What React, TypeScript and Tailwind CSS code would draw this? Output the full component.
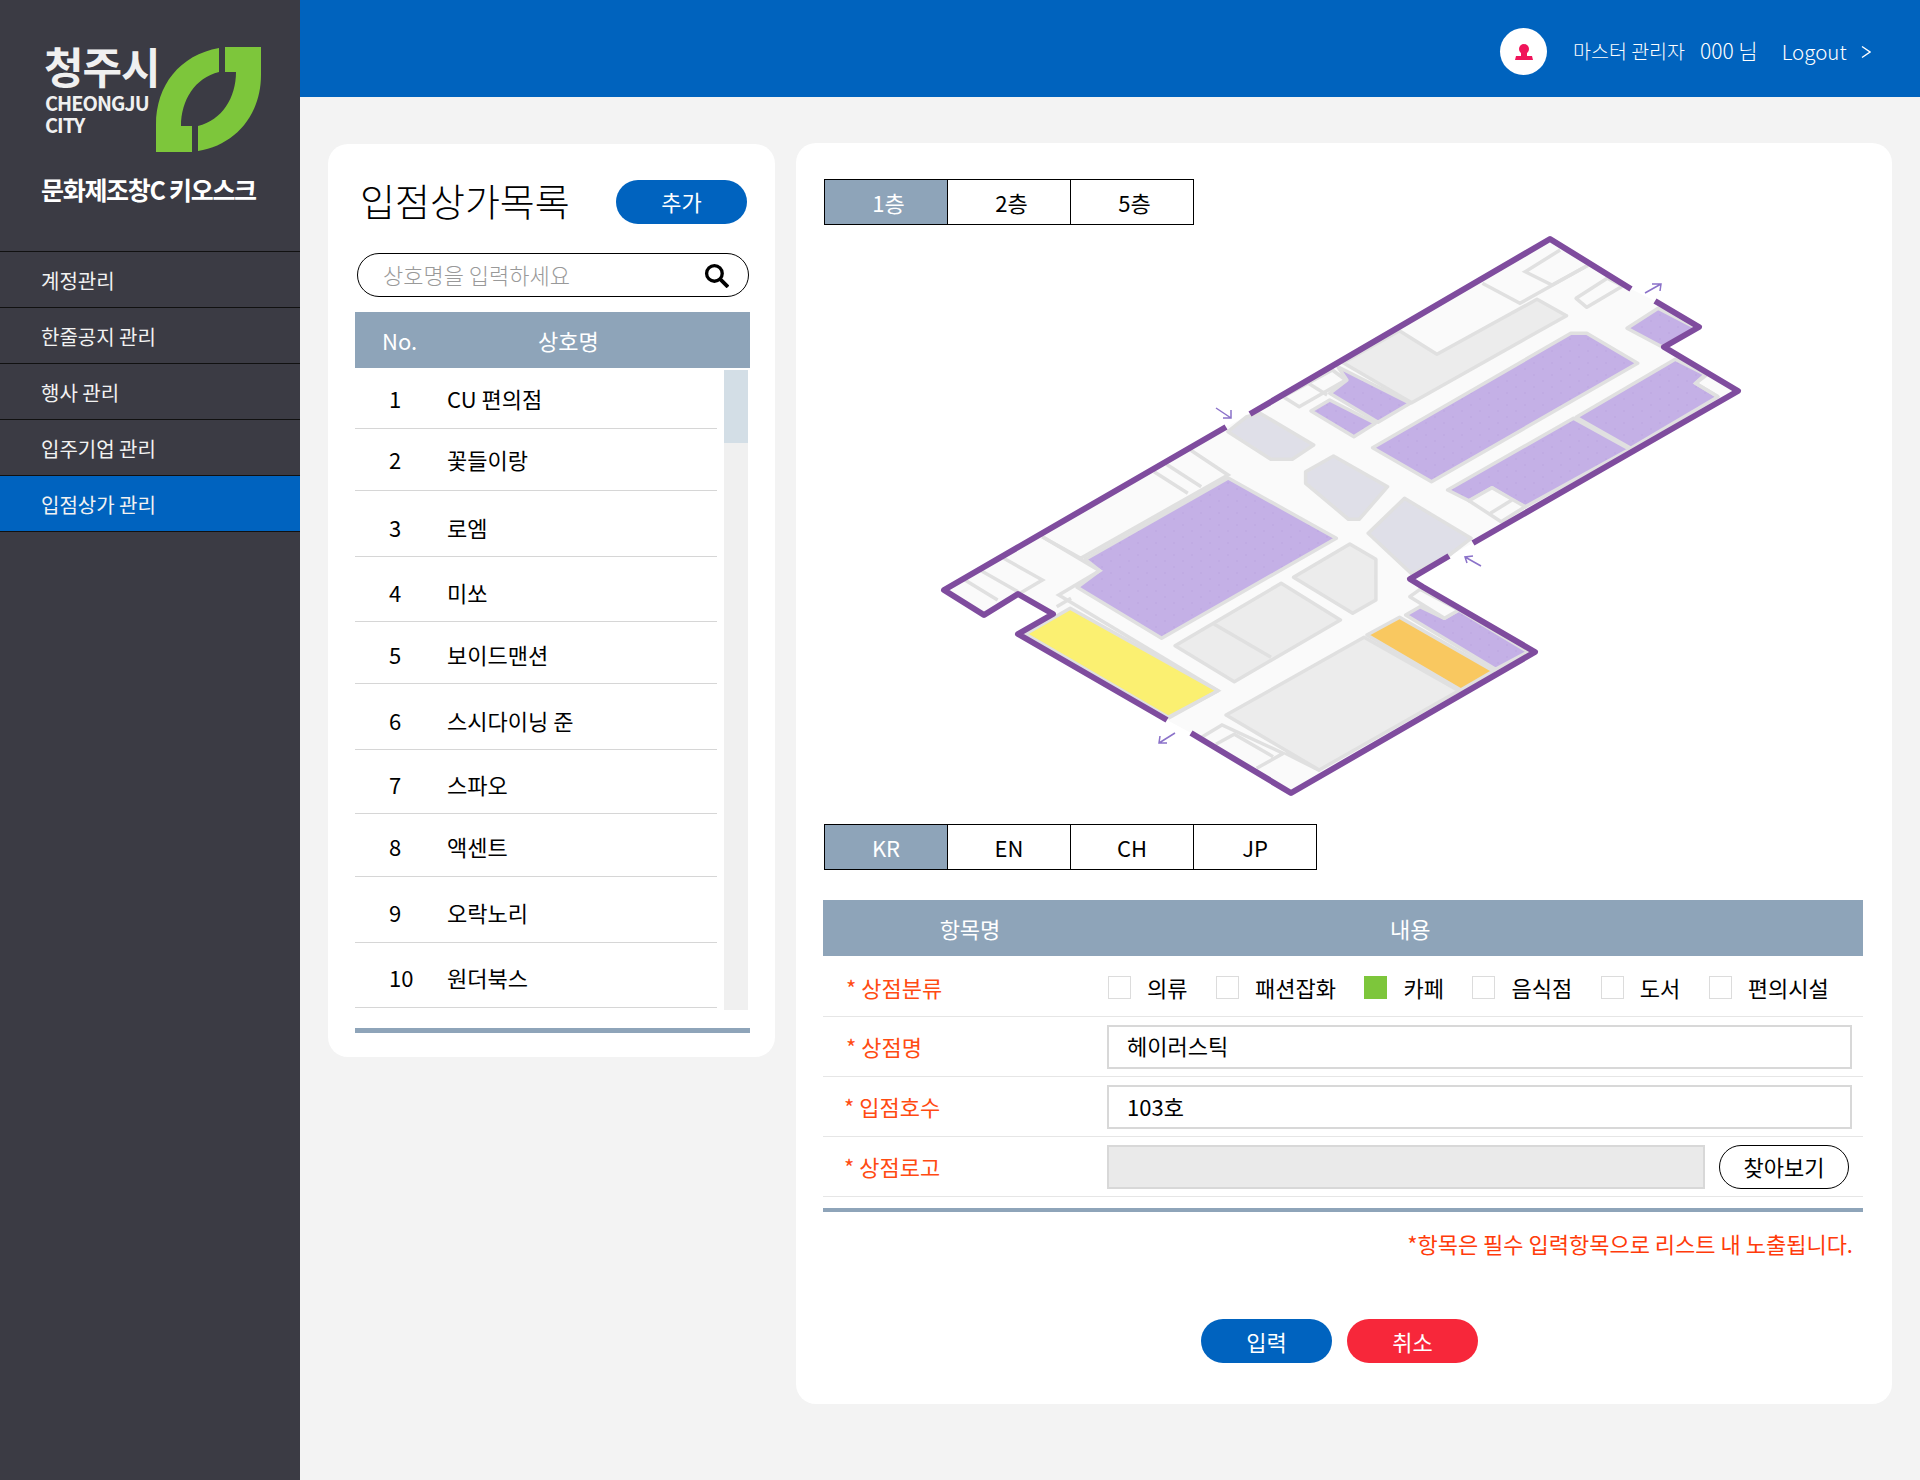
import React from 'react';

const FONT = "font-['Noto_Sans_CJK_KR','Noto_Sans',sans-serif]";

// map coordinates read off the two crops of the floor plan into page pixels
const z2 = (s: string) =>
    s.split(' ').map((p) => {
        const [x, y] = p.split(',').map(Number);
        return `${(920 + x / 1.867).toFixed(1)},${(220 + y / 3).toFixed(1)}`;
    }).join(' ');
const z3 = (s: string) =>
    s.split(' ').map((p) => {
        const [x, y] = p.split(',').map(Number);
        return `${(920 + x / 2.45).toFixed(1)},${(500 + y / 3).toFixed(1)}`;
    }).join(' ');

const menu = ['계정관리', '한줄공지 관리', '행사 관리', '입주기업 관리', '입점상가 관리'];

const shops = [
    { no: 1, name: 'CU 편의점', h: 'h-[59px] pb-[1px]' },
    { no: 2, name: '꽃들이랑', h: 'h-[62px]' },
    { no: 3, name: '로엠', h: 'h-[66px] pt-[7px]' },
    { no: 4, name: '미쏘', h: 'h-[65px] pt-[6px]' },
    { no: 5, name: '보이드맨션', h: 'h-[62px] pt-[4px]' },
    { no: 6, name: '스시다이닝 준', h: 'h-[66px] pt-[8px]' },
    { no: 7, name: '스파오', h: 'h-[64px] pt-[6px]' },
    { no: 8, name: '액센트', h: 'h-[63px] pt-[3px]' },
    { no: 9, name: '오락노리', h: 'h-[66px] pt-[6px]' },
    { no: 10, name: '원더북스', h: 'h-[65px] pt-[4px]' },
];

const categories = [
    { label: '의류', on: false },
    { label: '패션잡화', on: false },
    { label: '카페', on: true },
    { label: '음식점', on: false },
    { label: '도서', on: false },
    { label: '편의시설', on: false },
];

const Tabs: React.FC<{ items: string[]; shift?: boolean }> = ({ items, shift }) => (
    <div className="flex w-fit border border-black">
        {items.map((t, i) => (
            <div
                key={t}
                className={`flex h-[44px] items-center justify-center text-[22px] ${shift ? 'pl-[5px]' : ''} ${i > 0 ? 'w-[123px] border-l border-black text-black' : 'w-[122px] bg-[#8ea4b9] text-white'}`}
            >
                {t}
            </div>
        ))}
    </div>
);

const Label: React.FC<{ text: string; shift?: boolean }> = ({ text, shift }) => (
    <div className={`w-[284px] shrink-0 text-[22px] text-[#ff4b12] ${shift ? 'pl-[21px]' : 'pl-[23px]'}`}>* {text}</div>
);

const FloorPlan: React.FC = () => {
    const wall = 'fill-none stroke-[#7f4c9e] stroke-[6] [stroke-linejoin:round]';
    const room = 'stroke-[#e0e0e0] stroke-[3.5] [stroke-linejoin:round]';
    const line = 'fill-none stroke-[#e0e0e0] stroke-[3.5]';
    const arrow = 'fill-none stroke-[#8b72c9] stroke-[1.5]';
    return (
        <svg width="840" height="599" viewBox="920 225 840 599" className="ml-[96px] block">
            <defs>
                <pattern id="dots" width="18" height="12" patternUnits="userSpaceOnUse">
                    <rect width="18" height="12" fill="#c4b0e6" />
                    <circle cx="4" cy="3" r="0.7" fill="#b9a4df" />
                    <circle cx="13" cy="9" r="0.7" fill="#b9a4df" />
                </pattern>
            </defs>
            {/* floor */}
            <polygon
                className="fill-[#fafafa]"
                points="1550,239 1631,289 1655,301 1699,327 1664,347 1738,391 1473,543 1449,556 1410,579 1423,587 1535,652 1291,793 1191,733 1167,720 1018,634 1053,614 1018,594 984,615 944,590 1226,427 1250,414"
            />
            {/* purple shops */}
            <polygon className={room} fill="url(#dots)" points={z2('780,440 915,550 855,607 765,520 797,480')} />
            <polygon className={room} fill="url(#dots)" points={z2('765,540 850,610 810,650 730,573')} />
            <polygon className={room} fill="url(#dots)" points={z2('1215,340 1245,340 1340,430 955,785 845,683')} />
            <polygon className={room} fill="url(#dots)" points={z2('1410,418 1468,465 1448,490 1490,530 1327,685 1225,592')} />
            <polygon className={room} fill="url(#dots)" points={z2('1220,595 1325,688 1130,860 1105,840 1068,803 1025,842 985,810')} />
            <polygon className={room} fill="url(#dots)" points={z2('1378,265 1450,325 1385,380 1320,325')} />
            <polygon className={room} fill="url(#dots)" points={z3('755,-66 1020,115 592,415 385,262 440,212 405,178')} />
            <polygon className={room} fill="url(#dots)" points={z3('1190,345 1225,320 1285,355 1320,330 1490,455 1410,508')} />
            {/* grey rooms */}
            <polygon className={`${room} fill-[#ececec]`} points={z2('790,428 895,332 965,403 1152,238 1207,287 918,548')} />
            <polygon className={`${room} fill-[#dfdfe8]`} points={z2('575,635 610,590 635,580 735,675 695,718 655,718')} />
            <polygon className={`${room} fill-[#dfdfe8]`} points={z2('772,708 873,800 820,898 800,898 720,790 720,755')} />
            <polygon className={`${room} fill-[#dfdfe8]`} points={z3('1098,100 1187,-5 1350,115 1297,165 1205,222')} />
            <polygon className={`${room} fill-[#ececec]`} points={z3('885,250 1030,360 770,545 625,437')} />
            <polygon className={`${room} fill-[#ececec]`} points={z3('1053,132 1117,178 1117,300 1060,340 915,232')} />
            <polygon className={`${room} fill-[#ececec]`} points={z3('1088,412 1320,572 978,810 750,645')} />
            {/* coloured shops */}
            <polygon className={`${room} fill-[#fbf071]`} points={z3('368,325 730,572 608,652 258,402')} />
            <polygon className={`${room} fill-[#f9c860]`} points={z3('1175,352 1405,513 1325,570 1095,405')} />
            {/* small rooms and partitions */}
            <polygon className={`${room} fill-[#fafafa]`} points={z2('1225,235 1283,175 1312,198 1245,262')} />
            <polygon className={`${room} fill-[#fafafa]`} points={z2('678,530 708,560 795,480 770,450')} />
            <polygon className={`${room} fill-[#fafafa]`} points={z3('1200,290 1225,268 1320,330 1285,355')} />
            <polygon className={`${room} fill-[#fafafa]`} points={z2('1025,842 1068,803 1130,860 1085,905')} />
            <polyline className={line} points={z2('1195,90 1130,155 1180,195 1248,135')} />
            <polyline className={line} points={z2('1050,190 1120,250 1248,135')} />
            <polyline className={line} points={z2('725,490 760,525')} />
            <polyline className={line} points={z2('505,690 575,765 300,1015 228,950')} />
            <polyline className={line} points={z2('460,733 525,800')} />
            <polyline className={line} points={z2('437,755 500,820')} />
            <polyline className={line} points={z2('1465,465 1448,490 1490,530')} />
            <polyline className={line} points={z2('1065,880 1105,840')} />
            <polyline className={line} points={z3('720,372 860,472')} />
            <polyline className={line} points={z3('300,110 440,212 340,285 730,572 608,655')} />
            <polyline className={line} points={z3('205,175 300,240 245,280')} />
            <polyline className={line} points={z3('150,212 240,275')} />
            <polyline className={line} points={z3('110,240 190,300')} />
            <polyline className={line} points={z3('690,712 740,675 890,760 825,805')} />
            <polyline className={line} points={z3('725,733 770,703 865,770')} />
            <polyline className={line} points={z3('895,760 980,812')} />
            <polyline className={line} points={z3('335,320 370,295')} />
            {/* outer walls */}
            <polyline className={wall} points="1250,414 1550,239 1631,289" />
            <polyline className={wall} points="1655,301 1699,327 1664,347 1738,391 1473,543" />
            <polyline className={wall} points="1449,556 1410,579 1423,587 1535,652 1291,793 1191,733" />
            <polyline className={wall} points="1167,720 1018,634 1053,614 1018,594 984,615 944,590 1226,427" />
            {/* door arrows */}
            <path className={arrow} d="M1645 293 L1661 284 M1652 284 L1661 284 L1660 291" />
            <path className={arrow} d="M1216 408 L1231 418 M1231 410 L1231 418 L1223 418" />
            <path className={arrow} d="M1481 566 L1465 557 M1473 556 L1465 557 L1467 563" />
            <path className={arrow} d="M1175 733 L1159 743 M1167 743 L1159 743 L1160 736" />
        </svg>
    );
};

const App: React.FC = () => {
    return (
        <div className={`flex h-[1480px] w-[1920px] overflow-hidden bg-[#f3f3f3] ${FONT}`}>
            {/* sidebar */}
            <aside className="h-full w-[300px] shrink-0 bg-[#3b3b44] text-white">
                <div className="flex h-[252px] flex-col border-b border-[#111] pl-[41px] pt-[41px]">
                    <div className="flex">
                        <div className="w-[115px] whitespace-nowrap pl-[3px] font-bold text-[#f0f0f0]">
                            <div className="h-[48px] text-[43px] leading-[48px] tracking-[-1px]">청주시</div>
                            <div className="ml-[1px] mt-[3px] text-[20px] leading-[22px] tracking-[-1px]">CHEONGJU</div>
                            <div className="ml-[1px] text-[20px] leading-[21px] tracking-[-1px]">CITY</div>
                        </div>
                        <svg width="106" height="106" viewBox="156 46 106 106" className="mt-[5px]">
                            <path fill="#7dc63b" d="M156 152 L156 125 C156 85 180 55 219 48 L219 72 C195 78 181 100 181 126 L192 126 L192 152 Z" />
                            <path fill="#7dc63b" d="M225 47 L261 47 L261 75 C261 115 235 145 198 151 L198 126 C222 120 236 98 236 72 L225 72 Z" />
                        </svg>
                    </div>
                    <div className="mt-[20px] text-[25px] font-bold leading-[34px] tracking-[-1.3px]">문화제조창C 키오스크</div>
                </div>
                {menu.map((m, i) => (
                    <div
                        key={m}
                        className={`flex h-[56px] items-center border-b border-[#111] pl-[41px] pt-[2px] text-[20px] text-[#f2f2f2] ${i === 4 ? 'bg-[#0063bf]' : ''}`}
                    >
                        {m}
                    </div>
                ))}
            </aside>

            <main className="flex min-w-0 flex-1 flex-col">
                {/* top bar */}
                <header className="flex h-[97px] items-center bg-[#0063be] pl-[1200px] pt-[6px] text-white">
                    <div className="flex h-[47px] w-[47px] shrink-0 items-center justify-center rounded-full bg-white">
                        <svg width="22" height="22" viewBox="0 0 22 22">
                            <circle cx="11" cy="8" r="5" fill="#f0145a" />
                            <path fill="#f0145a" d="M8 12h6v3h5l1 4H2l1-4h5z" />
                        </svg>
                    </div>
                    <span className="ml-[26px] whitespace-nowrap pb-[2px] text-[19.5px] font-light">마스터 관리자</span>
                    <span className="ml-[15px] whitespace-nowrap pb-[2px] text-[21px] font-light">000 님</span>
                    <span className="ml-[24px] text-[20.5px] font-light">Logout</span>
                    <svg width="10" height="14" viewBox="0 0 10 14" className="ml-[14px]">
                        <path d="M1 1.5 L9 7 L1 12.5" fill="none" stroke="white" strokeWidth="1.4" />
                    </svg>
                </header>

                <div className="flex items-start pl-[28px]">
                    {/* shop list */}
                    <section className="mt-[47px] h-[913px] w-[447px] shrink-0 rounded-[20px] bg-white pl-[27px] pr-[25px] pt-[32px]">
                        <div className="flex h-[48px] items-center justify-between pl-[5px] pr-[3px]">
                            <h1 className="text-[38px] font-light leading-none text-black">입점상가목록</h1>
                            <button className="mt-[4px] h-[44px] w-[131px] rounded-full bg-[#0063bf] pb-[2px] text-[22px] text-white">추가</button>
                        </div>
                        <div className="ml-[2px] mt-[29px] flex h-[44px] w-[392px] items-center justify-between rounded-full border-[1.5px] border-black pl-[25px] pr-[19px]">
                            <span className="pb-[2px] text-[22px] font-light text-[#999]">상호명을 입력하세요</span>
                            <svg width="25" height="25" viewBox="0 0 24 24">
                                <circle cx="10" cy="10" r="7.5" fill="none" stroke="black" strokeWidth="3.2" />
                                <path d="M15.5 15.5 L23 23" stroke="black" strokeWidth="3.6" />
                            </svg>
                        </div>
                        <div className="mt-[15px] flex h-[56px] w-[395px] items-center bg-[#8ea4b9] text-[22px] text-white">
                            <span className="ml-[27px] w-[156px]">No.</span>
                            <span>상호명</span>
                        </div>
                        <div className="mt-[2px] flex w-[395px] items-start">
                            <div className="w-[362px]">
                                {shops.map((s) => (
                                    <div key={s.no} className={`flex items-center border-b border-[#d6d6d6] text-[22px] text-black ${s.h}`}>
                                        <span className="w-[92px] pl-[34px]">{s.no}</span>
                                        <span>{s.name}</span>
                                    </div>
                                ))}
                            </div>
                            <div className="ml-[7px] h-[640px] w-[24px] bg-[#f0f0f0]">
                                <div className="h-[73px] bg-[#d3dee6]" />
                            </div>
                        </div>
                        <div className="mt-[18px] h-[5px] w-[395px] bg-[#8ea4b9]" />
                    </section>

                    {/* shop detail */}
                    <section className="ml-[21px] mt-[46px] h-[1261px] w-[1096px] shrink-0 rounded-[20px] bg-white pl-[28px] pt-[36px]">
                        <Tabs items={['1층', '2층', '5층']} shift />
                        <FloorPlan />
                        <Tabs items={['KR', 'EN', 'CH', 'JP']} />

                        <div className="-ml-px mt-[30px] w-[1040px]">
                            <div className="flex h-[56px] items-center bg-[#8ea4b9] text-[22px] text-white">
                                <span className="w-[294px] text-center">항목명</span>
                                <span className="ml-[273px]">내용</span>
                            </div>
                            <div className="flex h-[61px] items-center border-b border-[#e6e6e6] pt-[2px]">
                                <Label text="상점분류" />
                                <div className="flex items-center gap-[28.5px] pl-[1px]">
                                    {categories.map((c) => (
                                        <div key={c.label} className="flex items-center gap-[16px]">
                                            <span className={`h-[23px] w-[23px] border ${c.on ? 'border-[#7dc63b] bg-[#7dc63b]' : 'border-[#dcdcdc] bg-white'}`} />
                                            <span className="text-[22px] text-black">{c.label}</span>
                                        </div>
                                    ))}
                                </div>
                            </div>
                            <div className="flex h-[60px] items-center border-b border-[#e6e6e6]">
                                <Label text="상점명" />
                                <div className="flex h-[44px] w-[745px] items-center border-2 border-[#d8d8d8] pb-[2px] pl-[18px] text-[22px] text-black">헤이러스틱</div>
                            </div>
                            <div className="flex h-[60px] items-center border-b border-[#e6e6e6]">
                                <Label text="입점호수" shift />
                                <div className="flex h-[44px] w-[745px] items-center border-2 border-[#d8d8d8] pl-[18px] text-[22px] text-black">103호</div>
                            </div>
                            <div className="flex h-[60px] items-center border-b border-[#e6e6e6]">
                                <Label text="상점로고" shift />
                                <div className="h-[44px] w-[598px] border-2 border-[#d8d8d8] bg-[#eaeaea]" />
                                <button className="ml-[14px] h-[44px] w-[130px] rounded-full border border-black text-[22px] text-black">찾아보기</button>
                            </div>
                            <div className="mt-[11px] h-[4px] bg-[#8ea4b9]" />
                            <p className="mt-[15px] pr-[10px] text-right text-[22px] text-[#ff3b0a]">*항목은 필수 입력항목으로 리스트 내 노출됩니다.</p>
                            <div className="mt-[59px] flex gap-[15px] pl-[378px]">
                                <button className="h-[44px] w-[131px] rounded-full bg-[#0063bf] text-[22px] text-white">입력</button>
                                <button className="h-[44px] w-[131px] rounded-full bg-[#f7273a] text-[22px] text-white">취소</button>
                            </div>
                        </div>
                    </section>
                </div>
            </main>
        </div>
    );
};

export default App;
